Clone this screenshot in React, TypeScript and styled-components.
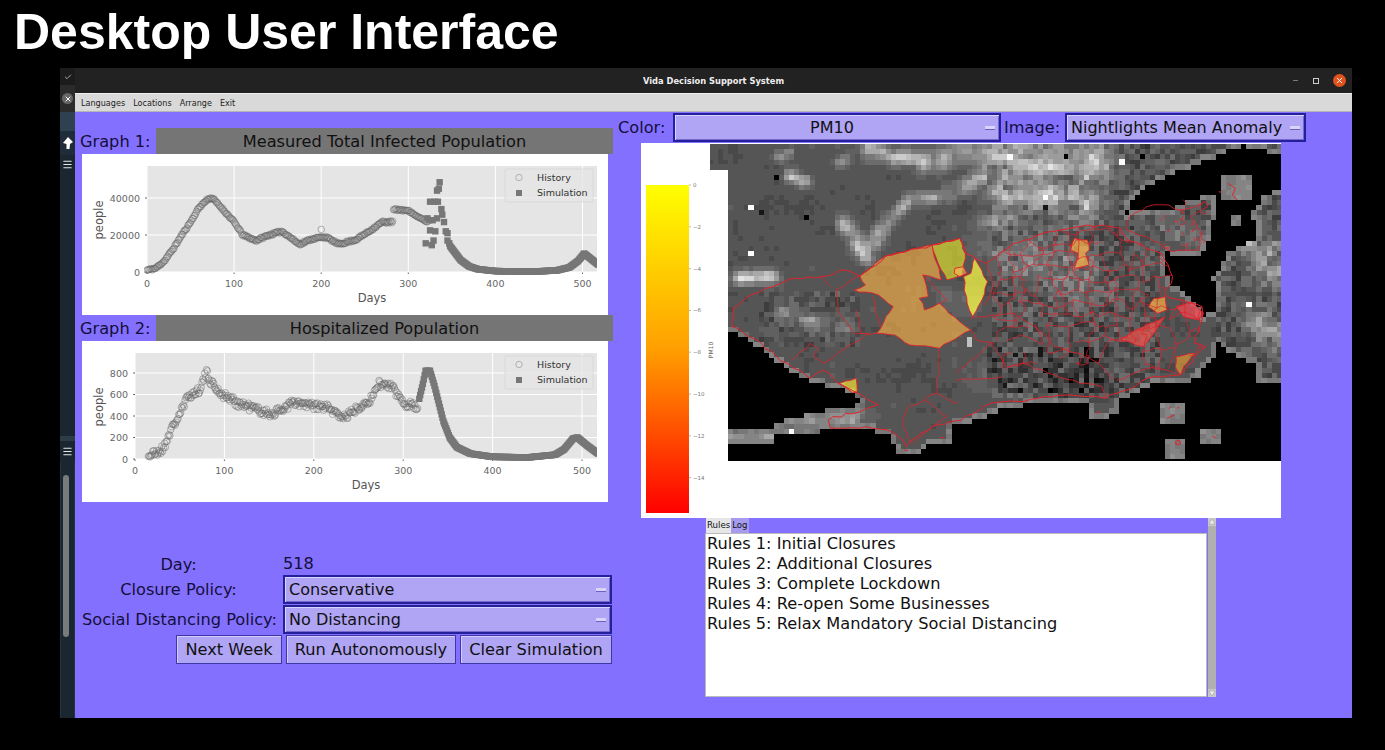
import React from 'react';
import styled, { createGlobalStyle } from 'styled-components';
import { Check, Menu, Minus, X } from 'lucide-react';

const UI_FONT = '"DejaVu Sans", sans-serif';

const GlobalStyle = createGlobalStyle`
  html, body {
    margin: 0;
    padding: 0;
    background: #000;
    overflow: hidden;
  }
`;

const Page = styled.div`
  width: 1385px;
  height: 750px;
  background: #000;
  display: flex;
  flex-direction: column;
`;

const Heading = styled.h1`
  margin: 0;
  height: 68px;
  padding: 4px 0 0 14px;
  box-sizing: border-box;
  color: #fff;
  font: bold 50px/56px "Liberation Sans", Arial, sans-serif;
`;

const Desktop = styled.div`
  display: flex;
  width: 1292px;
  height: 650px;
  margin-left: 60px;
`;

// Launcher strip on the left of the window
const Sidebar = styled.div`
  width: 15px;
  display: flex;
  flex-direction: column;
  background: #1a2630;
`;

const SideCell = styled.div<{ $h: number; $bg: string }>`
  height: ${p => p.$h}px;
  flex: none;
  background: ${p => p.$bg};
  display: flex;
  align-items: center;
  justify-content: center;
  color: #e8e8e8;
`;

const SideBadge = styled.span`
  width: 11px;
  height: 11px;
  border-radius: 50%;
  background: #666;
  display: flex;
  align-items: center;
  justify-content: center;
  color: #fff;
`;

const SideTrack = styled.div`
  flex: 1;
  padding: 13px 2px 0;
  border-left: 1px solid #25333e;
  border-right: 1px solid #25333e;
`;

const SideThumb = styled.div`
  width: 6px;
  height: 162px;
  border-radius: 3px;
  background: #777b7c;
`;

const AppWindow = styled.div`
  flex: 1;
  display: flex;
  flex-direction: column;
  min-width: 0;
`;

const TitleBar = styled.div`
  height: 25px;
  flex: none;
  background: #222;
  display: grid;
  grid-template-columns: 1fr auto 1fr;
  align-items: center;
  color: #eee;
  font: bold 8.3px ${UI_FONT};
`;

const TitleText = styled.span`
  grid-column: 2;
`;

const WindowButtons = styled.div`
  grid-column: 3;
  justify-self: end;
  display: flex;
  align-items: center;
  gap: 14px;
  padding-right: 6px;
  color: #bbb;
`;

const RestoreIcon = styled.span`
  width: 4px;
  height: 4px;
  border: 1px solid #ccc;
`;

const CloseButton = styled.span`
  width: 13px;
  height: 13px;
  border-radius: 50%;
  background: #e2521f;
  color: #fff;
  display: flex;
  align-items: center;
  justify-content: center;
`;

const MenuBar = styled.div`
  height: 19px;
  flex: none;
  box-sizing: border-box;
  background: #d9d9d9;
  border-top: 1px solid #eee;
  border-bottom: 1px solid #b5b5b5;
  display: flex;
  align-items: center;
  gap: 8px;
  padding-left: 6px;
  color: #222;
  font: 8.1px ${UI_FONT};
`;

const Content = styled.div`
  flex: 1;
  display: flex;
  background: #8470ff;
  color: #130f3a;
  font: 16.2px ${UI_FONT};
`;

const LeftColumn = styled.div`
  width: 538px;
  flex: none;
  box-sizing: border-box;
  padding: 16px 0 0 5px;
`;

const GraphHead = styled.div`
  display: flex;
  width: 533px;
  height: 26px;
  align-items: center;
`;

const GraphLabel = styled.span`
  width: 76px;
  flex: none;
`;

const GraphTitle = styled.div`
  flex: 1;
  height: 100%;
  background: #757575;
  color: #111;
  display: flex;
  align-items: center;
  justify-content: center;
`;

const ChartPanel = styled.div`
  width: 526px;
  height: 161px;
  margin-left: 2px;
  background: #fff;
  line-height: 0;
`;

const PolicyForm = styled.div`
  width: 530px;
  margin: 52px 0 0 2px;
  display: grid;
  grid-template-columns: 201px 329px;
  row-gap: 1px;
  align-items: center;
`;

const FieldLabel = styled.span`
  padding-right: 8px;
  text-align: center;
  white-space: nowrap;
`;

const DayValue = styled.span`
  height: 20px;
  line-height: 20px;
`;

const Combo = styled.div<{ $w?: number }>`
  box-sizing: border-box;
  height: 29px;
  width: ${p => (p.$w ? `${p.$w}px` : 'auto')};
  flex: none;
  padding: 0 4px;
  background: #b0a4f5;
  border: 2px solid #23209a;
  box-shadow: inset 1px 1px 0 #d9d3ff, inset -1px -1px 0 #7668cf;
  color: #111;
  font-size: 16.05px;
  display: flex;
  align-items: center;
`;

const ComboText = styled.span<{ $center?: boolean }>`
  flex: 1;
  text-align: ${p => (p.$center ? 'center' : 'left')};
  white-space: nowrap;
`;

const ComboArrow = styled.span`
  width: 10px;
  height: 3px;
  flex: none;
  background: #d8d3f8;
  border-bottom: 1px solid #6d60c0;
`;

const ButtonRow = styled.div`
  grid-column: 1 / 3;
  display: flex;
  justify-content: flex-end;
  gap: 4px;
`;

const ActionButton = styled.button<{ $w: number }>`
  box-sizing: border-box;
  width: ${p => p.$w}px;
  height: 29px;
  padding: 0;
  background: #b0a4f5;
  border: 1px solid #3f37a8;
  box-shadow: inset 1px 1px 0 #d2cbff;
  color: #111;
  font: 16.2px ${UI_FONT};
`;

const RightColumn = styled.div`
  flex: 1;
  display: flex;
  flex-direction: column;
  align-items: flex-start;
`;

const Toolbar = styled.div`
  display: flex;
  align-items: center;
  height: 29px;
  margin-top: 1px;
`;

const ToolLabel = styled.span<{ $w: number; $pad: number }>`
  width: ${p => p.$w}px;
  padding-left: ${p => p.$pad}px;
  box-sizing: border-box;
  white-space: nowrap;
`;

const MapPanel = styled.div`
  width: 640px;
  height: 375px;
  margin: 1px 0 0 28px;
  background: #fff;
  line-height: 0;
`;

const RulesPane = styled.div`
  display: flex;
  margin-left: 92px;
  height: 179px;
`;

const RulesBody = styled.div`
  width: 502px;
  display: flex;
  flex-direction: column;
`;

const TabStrip = styled.div`
  height: 15px;
  display: flex;
  padding-left: 1px;
  font: 8.6px ${UI_FONT};
  color: #111;
`;

const Tab = styled.span<{ $active?: boolean }>`
  padding: 2px 1px 0;
  background: ${p => (p.$active ? '#e6e6e6' : '#a79bf0')};
`;

const RulesText = styled.div`
  flex: 1;
  box-sizing: border-box;
  background: #fff;
  border: 1px solid #bbb;
  padding: 0 1px;
  color: #111;
  font: 16.2px/20px ${UI_FONT};
`;

const RulesScroll = styled.div`
  width: 8px;
  margin-left: 1px;
  background: #b0b0b0;
  display: flex;
  flex-direction: column;
  justify-content: space-between;
  line-height: 0;
`;

// --- data helpers ---

type Pt = [number, number];

function makeRng(seed: number) {
  let s = seed;
  return () => {
    s = (s + 0x6d2b79f5) | 0;
    let t = Math.imul(s ^ (s >>> 15), 1 | s);
    t = (t + Math.imul(t ^ (t >>> 7), 61 | t)) ^ t;
    return ((t ^ (t >>> 14)) >>> 0) / 4294967296;
  };
}

function interp(points: Pt[], x: number) {
  for (let i = 1; i < points.length; i++) {
    if (x <= points[i][0]) {
      const [x0, y0] = points[i - 1];
      const [x1, y1] = points[i];
      return y0 + ((y1 - y0) * (x - x0)) / (x1 - x0);
    }
  }
  return points[points.length - 1][1];
}

function sample(points: Pt[], jitter: number, seed: number): Pt[] {
  const rng = makeRng(seed);
  const out: Pt[] = [];
  for (let d = points[0][0]; d <= points[points.length - 1][0]; d++) {
    out.push([d, interp(points, d) + (rng() - 0.5) * jitter]);
  }
  return out;
}

const infectedHistory: Pt[] = [
  ...sample([[0, 1000], [10, 2000], [20, 6000], [30, 12500], [40, 20000], [50, 27000], [60, 35000], [70, 39500], [75, 40000], [85, 35000], [100, 27000], [110, 20000], [125, 17000], [140, 20000], [155, 22000], [175, 15000], [190, 18000], [205, 19000], [220, 15000], [240, 17500], [255, 22000], [270, 27000], [282, 27000]], 1100, 11),
  ...sample([[283, 34000], [300, 33000], [315, 29000], [322, 27000]], 900, 12),
  [200, 23000],
];

const infectedSim: Pt[] = [
  [320, 15500], [327, 14500], [329, 17000], [325, 22500], [331, 22000], [322, 29000], [324, 28000], [328, 28000],
  [333, 29000], [325, 38000], [330, 38000], [334, 38000], [333, 44000], [335, 45000], [336, 48500], [338, 34000],
  [339, 31000], [341, 27000], [343, 22000], [345, 21000], [345, 17000], [347, 15500],
  ...sample([[348, 14000], [360, 6500], [370, 3000], [380, 1500], [400, 500], [440, 200], [470, 800], [485, 2500], [495, 6000], [502, 10000], [510, 7000], [518, 4000]], 0, 13),
];

const hospitalHistory: Pt[] = sample(
  [[15, 30], [25, 60], [32, 100], [38, 230], [45, 340], [55, 500], [60, 600], [65, 600], [72, 650], [80, 800], [85, 720], [92, 640], [100, 590], [115, 520], [130, 480], [150, 420], [160, 440], [175, 520], [185, 510], [200, 490], [215, 480], [225, 420], [235, 390], [245, 450], [255, 520], [265, 560], [272, 700], [285, 680], [292, 620], [300, 520], [310, 510], [316, 470]],
  75,
  21,
);

const hospitalSim: Pt[] = sample(
  [[318, 560], [322, 700], [325, 820], [330, 820], [335, 680], [345, 350], [352, 200], [360, 110], [375, 50], [400, 20], [440, 15], [470, 40], [480, 90], [490, 190], [495, 200], [505, 130], [518, 50]],
  0,
  22,
);

// --- charts ---

interface ChartProps {
  x0: number;
  xScale: number;
  yScale: number;
  yTicks: number[];
  daysX: number;
  peopleX: number;
  history: Pt[];
  simulation: Pt[];
}

const CHART_RIGHT = 515;
const CHART_TOP = 12;
const CHART_BOTTOM = 118;

const TimeChart: React.FC<ChartProps> = ({ x0, xScale, yScale, yTicks, daysX, peopleX, history, simulation }) => {
  const px = (d: number) => x0 + d * xScale;
  const py = (v: number) => CHART_BOTTOM - v * yScale;
  const xTicks = [0, 100, 200, 300, 400, 500];
  return (
    <svg width={526} height={161} fontFamily={UI_FONT}>
      <rect x={x0} y={CHART_TOP} width={CHART_RIGHT - x0} height={CHART_BOTTOM - CHART_TOP} fill="#e5e5e5" />
      {xTicks.map(t => (
        <g key={t}>
          <line x1={px(t)} x2={px(t)} y1={CHART_TOP} y2={CHART_BOTTOM} stroke="#fff" />
          <line x1={px(t)} x2={px(t)} y1={CHART_BOTTOM} y2={CHART_BOTTOM + 2} stroke="#666" />
          <text x={px(t)} y={133} fontSize={9.5} fill="#666" textAnchor="middle">{t}</text>
        </g>
      ))}
      {yTicks.map(t => (
        <g key={t}>
          <line x1={x0} x2={CHART_RIGHT} y1={py(t)} y2={py(t)} stroke="#fff" />
          <line x1={x0 - 2} x2={x0} y1={py(t)} y2={py(t)} stroke="#666" />
          <text x={x0 - 7} y={py(t) + 3.5} fontSize={9.5} fill="#666" textAnchor="end">{t}</text>
        </g>
      ))}
      <svg x={x0 - 3} y={CHART_TOP} width={CHART_RIGHT - x0 + 3} height={CHART_BOTTOM - CHART_TOP + 4} viewBox={`${x0 - 3} ${CHART_TOP} ${CHART_RIGHT - x0 + 3} ${CHART_BOTTOM - CHART_TOP + 4}`}>
        {history.map(([d, v], i) => (
          <circle key={i} cx={px(d)} cy={py(v)} r={3.3} fill="none" stroke="#666" strokeOpacity={0.6} strokeWidth={0.8} />
        ))}
        {simulation.map(([d, v], i) => (
          <rect key={i} x={px(d) - 3.2} y={py(v) - 3.2} width={6.4} height={6.4} fill="#777" />
        ))}
      </svg>
      <rect x={423} y={15} width={88} height={33} rx={1.5} fill="#e5e5e5" fillOpacity={0.8} stroke="#ccc" strokeOpacity={0.7} strokeWidth={0.7} />
      <circle cx={437} cy={23.5} r={3.2} fill="none" stroke="#888" strokeOpacity={0.7} strokeWidth={0.8} />
      <rect x={434} y={36} width={6} height={6} fill="#777" />
      <text x={455} y={27} fontSize={9.5} fill="#333">History</text>
      <text x={455} y={42} fontSize={9.5} fill="#333">Simulation</text>
      <text x={daysX} y={148} fontSize={11.5} fill="#555" textAnchor="middle">Days</text>
      <text x={peopleX} y={66} fontSize={11.5} fill="#555" textAnchor="middle" dominantBaseline="middle" transform={`rotate(-90 ${peopleX} 66)`}>people</text>
    </svg>
  );
};

// --- map ---

const CELL = 5.08;
const MAP_LEFT = 707.68;
const MAP_RIGHT = 1281;
const MAP_TOP = 144;
const MAP_BOTTOM = 461;

// zoomed map coordinates used for the outlines: x = 710 + .37X, y = 220 + Y/3
const toReal = (pts: Pt[]): Pt[] => pts.map(([x, y]) => [710 + 0.37 * x, 220 + y / 3]);

const lowerBlack = toReal([
  [48, 325], [130, 380], [200, 440], [260, 480], [330, 500], [380, 520], [420, 550], [320, 570], [250, 590], [175, 610],
  [175, 628], [48, 628], [48, 668], [170, 668], [175, 640], [430, 625], [490, 650], [500, 705], [550, 705], [600, 665],
  [655, 665], [655, 615], [720, 600], [800, 560], [1020, 545], [1020, 605], [1110, 580], [1110, 540], [1200, 490],
  [1310, 480], [1360, 410], [1370, 370], [1400, 390], [1470, 430], [1470, 485], [1545, 485], [1545, 740], [48, 740],
]);

const upperBlack: Pt[] = [
  [1243, 145], [1207, 160], [1173, 173], [1147, 187], [1127, 207], [1125, 213], [1170, 210], [1200, 197], [1217, 193],
  [1213, 220], [1207, 245], [1200, 255], [1165, 253], [1162, 265], [1172, 285], [1190, 297], [1203, 315], [1214, 312],
  [1213, 277], [1230, 250], [1257, 237], [1253, 213], [1263, 197], [1283, 188], [1283, 157],
];

const islands: [number, number, number, number][] = [
  [1223, 175, 1250, 200],
  [1232, 215, 1243, 227],
  [1162, 402, 1184, 422],
  [1164, 437, 1186, 457],
  [1200, 428, 1222, 444],
];

// cloud bands: x0, y0, x1, y1, radius, amplitude
const cloudBands: [number, number, number, number, number, number][] = [
  [778, 156, 790, 152, 6, 40], [790, 176, 806, 182, 6, 70], [838, 164, 850, 158, 5, 45],
  [843, 222, 868, 258, 7, 95], [868, 250, 888, 220, 7, 90], [888, 220, 910, 200, 6, 85], [910, 200, 945, 196, 8, 65], [945, 196, 985, 178, 10, 60],
  [985, 178, 1000, 165, 12, 55], [870, 152, 925, 162, 9, 85], [925, 162, 985, 150, 11, 75],
  [735, 278, 775, 276, 7, 85], [985, 222, 1012, 218, 8, 50],
  [1000, 155, 1090, 165, 22, 95], [1005, 190, 1085, 200, 20, 80], [1090, 150, 1120, 170, 10, 30],
  [1000, 250, 1080, 275, 24, 38], [785, 315, 815, 322, 10, 42], [830, 320, 850, 330, 7, 30], [950, 295, 975, 305, 10, 24],
  [1245, 235, 1275, 265, 20, 66], [1255, 320, 1280, 340, 14, 52],
  [780, 420, 855, 418, 11, 48], [728, 436, 770, 436, 7, 62], [980, 375, 1020, 385, 14, 22], [1165, 225, 1200, 240, 10, 32],
];

const pinnedCells: [number, number, number][] = [
  [751, 255, 255], [752, 206, 255], [778, 178, 0], [808, 216, 0], [760, 212, 20], [1012, 159, 255], [1065, 157, 0],
  [1122, 164, 255], [1143, 157, 0], [1043, 206, 20], [1250, 303, 255], [790, 433, 255], [971, 338, 190], [969, 347, 190],
];

function inPoly(x: number, y: number, poly: Pt[]) {
  let hit = false;
  for (let i = 0, j = poly.length - 1; i < poly.length; j = i++) {
    const [xi, yi] = poly[i];
    const [xj, yj] = poly[j];
    if (yi > y !== yj > y && x < ((xj - xi) * (y - yi)) / (yj - yi) + xi) hit = !hit;
  }
  return hit;
}

const inBox = (x: number, y: number, b: [number, number, number, number]) => x >= b[0] && x <= b[2] && y >= b[1] && y <= b[3];

function segmentDist2(x: number, y: number, x0: number, y0: number, x1: number, y1: number) {
  const dx = x1 - x0;
  const dy = y1 - y0;
  const t = Math.max(0, Math.min(1, ((x - x0) * dx + (y - y0) * dy) / (dx * dx + dy * dy)));
  return (x - x0 - t * dx) ** 2 + (y - y0 - t * dy) ** 2;
}

function buildMapLayers() {
  const rng = makeRng(77);
  const cols = Math.ceil((MAP_RIGHT - MAP_LEFT) / CELL);
  const rows = Math.ceil((MAP_BOTTOM - MAP_TOP) / CELL);
  const makeNoise = (span: number) => {
    const w = Math.ceil(cols / span) + 3;
    const h = Math.ceil(rows / span) + 3;
    const grid: number[] = [];
    for (let i = 0; i < w * h; i++) grid.push(rng());
    return (c: number, r: number) => {
      const cx = Math.floor(c / span);
      const cy = Math.floor(r / span);
      const fx = (c % span) / span;
      const fy = (r % span) / span;
      const at = (a: number, b: number) => grid[b * w + a];
      return at(cx, cy) * (1 - fx) * (1 - fy) + at(cx + 1, cy) * fx * (1 - fy) + at(cx, cy + 1) * (1 - fx) * fy + at(cx + 1, cy + 1) * fx * fy;
    };
  };
  const broad = makeNoise(4);
  const patchy = makeNoise(2);

  const black: boolean[][] = [];
  for (let r = 0; r < rows; r++) {
    black.push([]);
    for (let c = 0; c < cols; c++) {
      const x = MAP_LEFT + (c + 0.5) * CELL;
      const y = MAP_TOP + (r + 0.5) * CELL;
      const water = inPoly(x, y, lowerBlack) || inPoly(x, y, upperBlack);
      black[r].push(water && !islands.some(b => inBox(x, y, b)));
    }
  }

  const layers: Record<number, string> = {};
  for (let r = 0; r < rows; r++) {
    for (let c = 0; c < cols; c++) {
      const x = MAP_LEFT + c * CELL;
      const y = MAP_TOP + r * CELL;
      if (black[r][c]) continue;
      const cx = x + CELL / 2;
      const cy = y + CELL / 2;
      let gray = 82 + (broad(c, r) - 0.5) * 16;
      let cloud = 0;
      for (const [x0, y0, x1, y1, radius, amp] of cloudBands) {
        cloud = Math.max(cloud, amp * Math.exp(-segmentDist2(cx, cy, x0, y0, x1, y1) / (radius * radius)));
      }
      gray += cloud * (0.35 + 1.3 * patchy(c, r)) * (0.85 + rng() * 0.3);
      const isCity = cx > 990 && cx < 1160 && cy > 225 && cy < 400;
      const isTop = cy < 240 && cx > 985;
      const isWest = cx > 760 && cx < 860 && cy > 290 && cy < 345;
      gray += (rng() - 0.5) * (isCity ? 60 : isTop ? 50 : cx > 1210 ? 50 : isWest ? 40 : 8);
      if (cx > 985 && cx < 1110 && cy > 345 && cy < 395) gray -= 70 * rng() ** 3;
      const coast = [[-1, 0], [1, 0], [0, -1], [0, 1]].some(([a, b]) => black[r + b]?.[c + a]);
      if (coast) gray = Math.max(gray, 112 + rng() * 26);
      if (islands.some(b => inBox(cx, cy, b))) gray = 116 + rng() * 24;
      for (const [px, py, value] of pinnedCells) {
        if (px >= x && px < x + CELL && py >= y && py < y + CELL) gray = value;
      }
      const level = Math.max(0, Math.min(255, Math.round(gray / 12) * 12));
      layers[level] = (layers[level] || '') + `M${x.toFixed(1)} ${y.toFixed(1)}h${CELL + 0.3}v${CELL + 0.3}h-${CELL + 0.3}z`;
    }
  }
  return layers;
}

const mapLayers = buildMapLayers();

const line = (pts: number[]) => {
  let d = '';
  for (let i = 0; i < pts.length; i += 2) d += `${i ? 'L' : 'M'}${pts[i]} ${pts[i + 1]}`;
  return d;
};

// breaks each segment up so a boundary wanders instead of running straight
function jagged(pts: number[], seed: number, amount = 7, closed = false) {
  const rng = makeRng(seed);
  const src = closed ? [...pts, pts[0], pts[1]] : pts;
  let d = `M${src[0]} ${src[1]}`;
  for (let i = 2; i < src.length; i += 2) {
    const [x0, y0, x1, y1] = [src[i - 2], src[i - 1], src[i], src[i + 1]];
    const steps = Math.max(1, Math.round(Math.hypot(x1 - x0, y1 - y0) / 18));
    for (let s = 1; s < steps; s++) {
      const t = s / steps;
      const dx = (rng() - 0.5) * amount;
      const dy = (rng() - 0.5) * amount;
      d += `L${(x0 + (x1 - x0) * t + dx).toFixed(1)} ${(y0 + (y1 - y0) * t + dy).toFixed(1)}`;
    }
    d += `L${x1} ${y1}`;
  }
  return closed ? `${d}z` : d;
}

const outline = [
  62, 265, 90, 240, 150, 205, 230, 175, 300, 170, 365, 150, 405, 168, 475, 108, 600, 75, 675, 55, 690, 100, 745, 130, 820, 70, 900, 40, 1020, 15,
  1110, 25, 1130, 60, 1220, 100, 1250, 170, 1230, 225, 1330, 260, 1330, 300, 1310, 370, 1340, 380, 1310, 410, 1270, 465, 1200, 470, 1100, 520,
  1070, 535, 960, 525, 830, 545, 760, 550, 680, 600, 600, 620, 560, 650, 530, 680, 510, 650, 480, 630, 420, 620, 325, 625, 320, 600, 455, 555,
  400, 520, 345, 490, 305, 450, 270, 475, 210, 430, 105, 350, 60, 320,
];

const filledAreas: { pts: number[]; fill: string }[] = [
  { pts: [475, 108, 600, 75, 625, 180, 575, 165, 590, 230, 565, 235, 580, 270, 620, 250, 660, 290, 705, 330, 620, 385, 540, 375, 500, 345, 450, 340, 495, 260, 455, 225, 390, 210, 420, 195, 405, 168], fill: 'rgba(255,180,70,.62)' },
  { pts: [600, 75, 675, 55, 690, 100, 682, 165, 640, 180, 625, 150], fill: 'rgba(240,240,40,.6)' },
  { pts: [715, 115, 750, 185, 735, 240, 710, 290, 695, 250, 685, 170, 705, 160], fill: 'rgba(255,255,70,.72)' },
  { pts: [662, 145, 685, 140, 695, 160, 675, 170, 660, 160], fill: 'rgba(255,185,85,.6)' },
  { pts: [350, 490, 395, 475, 398, 515, 385, 518], fill: 'rgba(255,235,50,.65)' },
  { pts: [985, 55, 1020, 60, 1025, 90, 1015, 100, 1025, 135, 985, 145, 995, 100, 975, 90], fill: 'rgba(255,180,70,.7)' },
  { pts: [1200, 235, 1230, 230, 1235, 270, 1210, 280, 1185, 260], fill: 'rgba(255,180,70,.7)' },
  { pts: [1230, 290, 1200, 340, 1170, 380, 1110, 360, 1150, 330], fill: 'rgba(255,80,70,.65)' },
  { pts: [1260, 260, 1300, 245, 1335, 280, 1320, 300, 1280, 290], fill: 'rgba(255,70,80,.7)' },
  { pts: [1260, 410, 1310, 400, 1280, 440, 1272, 465, 1258, 440], fill: 'rgba(255,170,40,.55)' },
];

const districtLines: number[][] = [
  [405, 168, 340, 210, 345, 270, 390, 340, 430, 340],
  [395, 270, 410, 340],
  [440, 230, 460, 320],
  [300, 170, 325, 200],
  [220, 420, 270, 370, 290, 385, 280, 410, 305, 430, 420, 345, 450, 340],
  [620, 385, 612, 520, 670, 550],
  [612, 520, 530, 570, 520, 620, 545, 670],
  [580, 540, 640, 590, 590, 630, 550, 670],
  [665, 460, 760, 370, 800, 440, 845, 430, 1000, 490, 1060, 500, 1070, 535],
  [705, 330, 720, 360, 770, 370],
  [665, 480, 790, 470],
  [705, 295, 820, 280, 900, 340, 930, 380, 1000, 400, 1050, 430, 1090, 480],
  [1050, 430, 1080, 360, 1130, 350],
  [1100, 480, 1200, 440, 1260, 460],
  [750, 130, 765, 200, 740, 255],
  [575, 165, 640, 240, 620, 250],
];

const northLobe = [1125, 30, 1135, -10, 1180, -40, 1240, -45, 1270, -30, 1340, -55, 1345, -40, 1300, -10, 1330, 40, 1320, 90, 1250, 95, 1225, 80, 1180, 50, 1125, 30];

const islandLines: number[][] = [
  [1045, 580, 1055, 575], [1235, 595, 1255, 585], [1240, 565, 1245, 562], [1262, 565, 1268, 562], [1258, 665, 1268, 660, 1272, 672, 1260, 674, 1258, 665],
  [1358, 648, 1368, 655], [622, 652, 634, 654], [525, 690, 535, 692],
  [1400, -110, 1420, -95, 1412, -75, 1425, -60], [1375, -85, 1382, -83],
];

function buildCityNet() {
  const rng = makeRng(5);
  const step = 36;
  const nodes: Pt[][] = [];
  for (let r = 0; r <= 12; r++) {
    nodes.push([]);
    for (let c = 0; c <= 16; c++) {
      nodes[r].push([780 + c * step + (rng() - 0.5) * 32, r * step + (rng() - 0.5) * 32]);
    }
  }
  const wobble = (a: Pt, b: Pt) => {
    let d = `M${a[0].toFixed(0)} ${a[1].toFixed(0)}`;
    for (const t of [0.33, 0.66]) {
      d += `L${(a[0] + (b[0] - a[0]) * t + (rng() - 0.5) * 14).toFixed(0)} ${(a[1] + (b[1] - a[1]) * t + (rng() - 0.5) * 14).toFixed(0)}`;
    }
    return `${d}L${b[0].toFixed(0)} ${b[1].toFixed(0)}`;
  };
  let d = '';
  for (let r = 0; r <= 12; r++) {
    for (let c = 0; c <= 16; c++) {
      const limit = r > 9 ? 0.3 : 0.78;
      if (c < 16 && rng() < limit) d += wobble(nodes[r][c], nodes[r][c + 1]);
      if (r < 12 && rng() < limit) d += wobble(nodes[r][c], nodes[r + 1][c]);
    }
  }
  return d;
}

const cityNet = buildCityNet();

function buildLobeNet() {
  const rng = makeRng(9);
  let d = '';
  for (let i = 0; i < 22; i++) {
    const x = 1210 + rng() * 120;
    const y = -40 + rng() * 130;
    d += `M${x.toFixed(0)} ${y.toFixed(0)}l${(rng() * 30 - 15).toFixed(0)} ${(rng() * 30 - 15).toFixed(0)}l${(rng() * 24 - 12).toFixed(0)} ${(rng() * 24 - 12).toFixed(0)}`;
  }
  return d;
}

const lobeNet = buildLobeNet();
const outlinePath = jagged(outline, 31, 9, true);

const colorTicks = [0, -2, -4, -6, -8, -10, -12, -14];

const RED = '#e0222c';

const PollutionMap: React.FC = () => (
  <svg width={640} height={375} viewBox="641 143 640 375" fontFamily={UI_FONT}>
    <defs>
      <linearGradient id="pm10" x1="0" y1="0" x2="0" y2="1">
        <stop offset="0" stopColor="#ffff00" />
        <stop offset="0.5" stopColor="#ff9f00" />
        <stop offset="1" stopColor="#ff0000" />
      </linearGradient>
      <filter id="soft" x="0" y="0" width="100%" height="100%">
        <feGaussianBlur stdDeviation="0.5" />
      </filter>
      <clipPath id="imageFrame">
        <path d="M710 144H1281V461H728V170H710Z" />
      </clipPath>
      <clipPath id="mainland">
        <path d={outlinePath} />
      </clipPath>
    </defs>
    <rect x={646} y={185} width={43} height={328} fill="url(#pm10)" />
    {colorTicks.map((t, i) => {
      const y = 185 + i * 41.8;
      return (
        <g key={t}>
          <line x1={689} x2={691} y1={y} y2={y} stroke="#888" strokeWidth={0.6} />
          <text x={693} y={y + 2} fontSize={5.5} fill="#777">{t === 0 ? '0' : `\u2212${-t}`}</text>
        </g>
      );
    })}
    <text x={711} y={350} fontSize={6} fill="#666" textAnchor="middle" dominantBaseline="middle" transform="rotate(-90 711 350)">PM10</text>
    <g clipPath="url(#imageFrame)">
      <rect x={700} y={144} width={581} height={317} fill="#000" />
      <g filter="url(#soft)">
        {Object.entries(mapLayers).map(([level, d]) => (
          <path key={level} d={d} fill={`rgb(${level},${level},${level})`} shapeRendering="crispEdges" />
        ))}
      </g>
    </g>
    <g transform="translate(710 220) scale(.37 .3333)">
      {filledAreas.map((a, i) => (
        <path key={i} d={jagged(a.pts, 40 + i, 6, true)} fill={a.fill} stroke={RED} strokeWidth={0.9} vectorEffect="non-scaling-stroke" />
      ))}
      <g clipPath="url(#mainland)">
        <path d={cityNet} fill="none" stroke={RED} strokeWidth={0.7} vectorEffect="non-scaling-stroke" />
      </g>
      <path d={outlinePath} fill="none" stroke={RED} strokeWidth={1} vectorEffect="non-scaling-stroke" />
      {districtLines.map((l, i) => (
        <path key={i} d={jagged(l, 60 + i, 7)} fill="none" stroke={RED} strokeWidth={0.8} vectorEffect="non-scaling-stroke" />
      ))}
      <path d={jagged(northLobe, 90, 8)} fill="none" stroke={RED} strokeWidth={0.8} vectorEffect="non-scaling-stroke" />
      <path d={lobeNet} fill="none" stroke={RED} strokeWidth={0.7} vectorEffect="non-scaling-stroke" />
      {islandLines.map((l, i) => (
        <path key={i} d={line(l)} fill="none" stroke={RED} strokeWidth={1} vectorEffect="non-scaling-stroke" />
      ))}
    </g>
  </svg>
);

const ScrollArrow: React.FC<{ down?: boolean }> = ({ down }) => (
  <svg width={8} height={8} viewBox="0 0 8 8">
    <rect width={8} height={8} fill="#c8c8c8" />
    <path d={down ? 'M1 2H7L4 7Z' : 'M1 6H7L4 1Z'} fill="#eee" stroke="#999" strokeWidth={0.5} />
  </svg>
);

const rules = [
  'Rules 1: Initial Closures',
  'Rules 2: Additional Closures',
  'Rules 3: Complete Lockdown',
  'Rules 4: Re-open Some Businesses',
  'Rules 5: Relax Mandatory Social Distancing',
];

const menuItems = ['Languages', 'Locations', 'Arrange', 'Exit'];

const App: React.FC = () => (
  <Page>
    <GlobalStyle />
    <Heading>Desktop User Interface</Heading>
    <Desktop>
      <Sidebar>
        <SideCell $h={17} $bg="#1c1c1c"><Check size={8} /></SideCell>
        <SideCell $h={27} $bg="#2b2b2b"><SideBadge><X size={8} strokeWidth={3} /></SideBadge></SideCell>
        <SideCell $h={19} $bg="#2f4050" />
        <SideCell $h={24} $bg="#1f2d3a">
          <svg width={12} height={14} viewBox="0 0 12 14">
            <path d="M1 7 L6 1 L11 6 L8 8 L7.5 13 L4.5 13 L4.5 8 Z" fill="#fff" />
          </svg>
        </SideCell>
        <SideCell $h={18} $bg="#1a2630"><Menu size={11} strokeWidth={2.4} /></SideCell>
        <SideCell $h={263} $bg="#1a2630" />
        <SideCell $h={5} $bg="#2d3d48" />
        <SideCell $h={21} $bg="#1a2630"><Menu size={11} strokeWidth={2.4} /></SideCell>
        <SideTrack><SideThumb /></SideTrack>
      </Sidebar>
      <AppWindow>
        <TitleBar>
          <TitleText>Vida Decision Support System</TitleText>
          <WindowButtons>
            <Minus size={7} />
            <RestoreIcon />
            <CloseButton><X size={9} strokeWidth={2.5} /></CloseButton>
          </WindowButtons>
        </TitleBar>
        <MenuBar>
          {menuItems.map(item => <span key={item}>{item}</span>)}
        </MenuBar>
        <Content>
          <LeftColumn>
            <GraphHead>
              <GraphLabel>Graph 1:</GraphLabel>
              <GraphTitle>Measured Total Infected Population</GraphTitle>
            </GraphHead>
            <ChartPanel>
              <TimeChart x0={65} xScale={0.871} yScale={0.00185} yTicks={[0, 20000, 40000]} daysX={290} peopleX={17} history={infectedHistory} simulation={infectedSim} />
            </ChartPanel>
            <GraphHead>
              <GraphLabel>Graph 2:</GraphLabel>
              <GraphTitle>Hospitalized Population</GraphTitle>
            </GraphHead>
            <ChartPanel>
              <TimeChart x0={53} xScale={0.894} yScale={0.1075} yTicks={[0, 200, 400, 600, 800]} daysX={284} peopleX={17} history={hospitalHistory} simulation={hospitalSim} />
            </ChartPanel>
            <PolicyForm>
              <FieldLabel>Day:</FieldLabel>
              <DayValue>518</DayValue>
              <FieldLabel>Closure Policy:</FieldLabel>
              <Combo><ComboText>Conservative</ComboText><ComboArrow /></Combo>
              <FieldLabel>Social Distancing Policy:</FieldLabel>
              <Combo><ComboText>No Distancing</ComboText><ComboArrow /></Combo>
              <ButtonRow>
                <ActionButton $w={106}>Next Week</ActionButton>
                <ActionButton $w={170}>Run Autonomously</ActionButton>
                <ActionButton $w={152}>Clear Simulation</ActionButton>
              </ButtonRow>
            </PolicyForm>
          </LeftColumn>
          <RightColumn>
            <Toolbar>
              <ToolLabel $w={60} $pad={5}>Color:</ToolLabel>
              <Combo $w={328}><ComboText $center>PM10</ComboText><ComboArrow /></Combo>
              <ToolLabel $w={64} $pad={3}>Image:</ToolLabel>
              <Combo $w={241}><ComboText>Nightlights Mean Anomaly</ComboText><ComboArrow /></Combo>
            </Toolbar>
            <MapPanel><PollutionMap /></MapPanel>
            <RulesPane>
              <RulesBody>
                <TabStrip>
                  <Tab $active>Rules</Tab>
                  <Tab>Log</Tab>
                </TabStrip>
                <RulesText>
                  {rules.map(rule => <div key={rule}>{rule}</div>)}
                </RulesText>
              </RulesBody>
              <RulesScroll>
                <ScrollArrow />
                <ScrollArrow down />
              </RulesScroll>
            </RulesPane>
          </RightColumn>
        </Content>
      </AppWindow>
    </Desktop>
  </Page>
);

export default App;
